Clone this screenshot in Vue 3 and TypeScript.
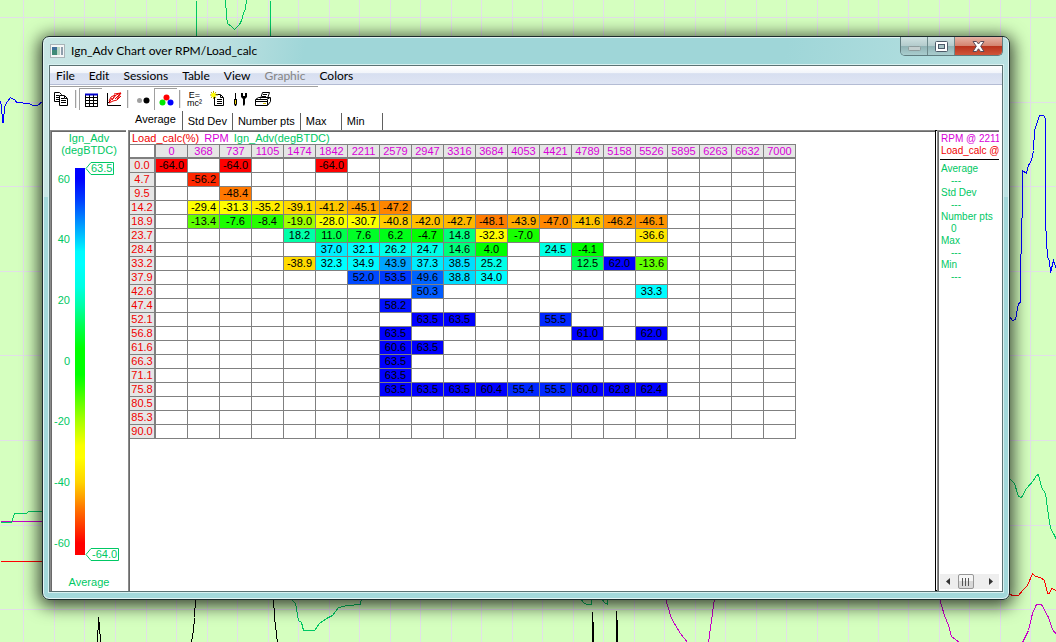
<script setup lang="ts">
interface Curve { color: string; points: string }
interface Stat { name: string; value: string }

const gridX: number[] = [23, 54, 84, 115, 146, 176, 207, 237, 268, 298, 329, 359, 390, 420, 451, 481, 512, 542, 573, 603, 634, 664, 695, 725, 756, 786, 817, 848, 878, 908, 939, 969, 1000, 1030]
const gridY: number[] = [17, 102, 186, 271, 355, 440, 525, 609]

const curves: Curve[] = [
  { color: '#0000ff', points: '0,101 1,105 2,122 3,122 4,106 7,101 10,97 15,100 16,102 29,103 32,105 37,105 42,101' },
  { color: '#00c864', points: '196,0 196,40' },
  { color: '#00c864', points: '270,0 270,40' },
  { color: '#00c864', points: '225,0 226,15 227,23 231,26 234,29 236,27 239,24 241,20 243,13 245,8 246,0' },
  { color: '#c800c8', points: '0,521 44,521' },
  { color: '#00c864', points: '0,522 11,522 14,513 26,513 28,511 44,511' },
  { color: '#ff0000', points: '0,561 44,561' },
  { color: '#000000', points: '97,642 98,617 99,625 100,642' },
  { color: '#000000', points: '191,642 193,630 194,617 195,598' },
  { color: '#000000', points: '273,598 274,617 276,634 277,642' },
  { color: '#00c864', points: '290,598 295,603 298,620 301,622 303,630 314,630 319,623 326,618 332,615 338,607 347,605 360,604 361,598' },
  { color: '#00c864', points: '580,598 583,602 586,604 591,604 591,598' },
  { color: '#00c864', points: '601,598 604,602 607,604 607,598' },
  { color: '#000000', points: '592,642 592,612 593,630 593,642' },
  { color: '#000000', points: '616,642 616,611 617,627 617,642' },
  { color: '#c800c8', points: '665,598 671,618 680,633 687,642' },
  { color: '#c800c8', points: '708,642 711,620 714,598' },
  { color: '#c800c8', points: '939,598 944,615 948,625 951,636 959,642' },
  { color: '#c800c8', points: '1022,642 1028,630 1032,613 1036,604 1041,604 1048,617 1052,629 1056,634' },
  { color: '#ff0000', points: '1008,593 1012,595 1018,595 1022,590 1027,585 1032,573 1035,576 1040,577 1044,580 1047,593 1049,593 1051,588 1056,590' },
  { color: '#00c864', points: '1008,477 1014,483 1018,496 1021,497 1026,488 1033,480 1036,475 1038,474 1041,487 1045,493 1048,515 1050,528 1053,533 1056,539' },
  { color: '#0000ff', points: '1009,316 1012,320 1015,319 1018,303 1020,302 1020,272 1022,200 1022,170 1026,173 1028,165 1031,160 1033,150 1034,130 1039,115 1043,115 1045,118 1045,222 1047,257 1049,260 1050,272 1053,260 1056,269' },
]

const menus: { label: string; off?: boolean }[] = [
  { label: 'File' }, { label: 'Edit' }, { label: 'Sessions' }, { label: 'Table' },
  { label: 'View' }, { label: 'Graphic', off: true }, { label: 'Colors' },
]
const tabs: string[] = ['Average', 'Std Dev', 'Number pts', 'Max', 'Min']

const columns: number[] = [0, 368, 737, 1105, 1474, 1842, 2211, 2579, 2947, 3316, 3684, 4053, 4421, 4789, 5158, 5526, 5895, 6263, 6632, 7000]

const source: [string, string][] = [
  ['0.0', '-64.0,,-64.0,,,-64.0'],
  ['4.7', ',-56.2'],
  ['9.5', ',,-48.4'],
  ['14.2', ',-29.4,-31.3,-35.2,-39.1,-41.2,-45.1,-47.2'],
  ['18.9', ',-13.4,-7.6,-8.4,-19.0,-28.0,-30.7,-40.8,-42.0,-42.7,-48.1,-43.9,-47.0,-41.6,-46.2,-46.1'],
  ['23.7', ',,,,18.2,11.0,7.6,6.2,-4.7,14.8,-32.3,-7.0,,,,-36.6'],
  ['28.4', ',,,,,37.0,32.1,26.2,24.7,14.6,4.0,,24.5,-4.1'],
  ['33.2', ',,,,-38.9,32.3,34.9,43.9,37.3,38.5,25.2,,,12.5,62.0,-13.6'],
  ['37.9', ',,,,,,52.0,53.5,49.6,38.8,34.0'],
  ['42.6', ',,,,,,,,50.3,,,,,,,33.3'],
  ['47.4', ',,,,,,,58.2'],
  ['52.1', ',,,,,,,,63.5,63.5,,,55.5'],
  ['56.8', ',,,,,,,63.5,,,,,,61.0,,62.0'],
  ['61.6', ',,,,,,,60.6,63.5'],
  ['66.3', ',,,,,,,63.5'],
  ['71.1', ',,,,,,,63.5'],
  ['75.8', ',,,,,,,63.5,63.5,63.5,60.4,55.4,55.5,60.0,62.8,62.4'],
  ['80.5', ''],
  ['85.3', ''],
  ['90.0', ''],
]
const rows = source.map(([load, list]) => {
  const values = list.split(',')
  return { load, cells: columns.map((_, i) => values[i] ?? '') }
})

const MAX = 63.5
const MIN = -64
const stops: [number, number, number, number][] = [
  [-64, 255, 0, 0], [-60, 255, 0, 0], [-56.2, 255, 40, 0], [-48.2, 255, 122, 0], [-45, 255, 160, 0],
  [-40, 255, 212, 0], [-32, 255, 255, 0], [-28, 250, 255, 0], [-19, 160, 255, 0], [-13.5, 96, 255, 0],
  [-8, 32, 255, 0], [-4.5, 0, 255, 0], [4, 0, 255, 0], [11, 0, 255, 76], [18.2, 0, 255, 168],
  [24.5, 0, 255, 228], [32, 0, 255, 255], [36, 0, 250, 255], [38.5, 0, 222, 255], [43.9, 0, 164, 255],
  [53.5, 0, 56, 255], [60, 0, 0, 255], [63.5, 0, 0, 255],
]
function colorFor(v: number): string {
  for (let i = 1; i < stops.length; i++) {
    const a = stops[i - 1]
    const b = stops[i]
    if (v <= b[0]) {
      const t = (v - a[0]) / (b[0] - a[0])
      const c = [1, 2, 3].map((k) => Math.round(a[k] + (b[k] - a[k]) * t))
      return `rgb(${c.join(',')})`
    }
  }
  return 'rgb(0,0,255)'
}
const place = (v: number): number => ((MAX - v) / (MAX - MIN)) * 100
const gradient = `linear-gradient(to top, ${stops.map((s) => `${colorFor(s[0])} ${(100 - place(s[0])).toFixed(2)}%`).join(', ')})`
const ticks: number[] = [60, 40, 20, 0, -20, -40, -60]

const stats: Stat[] = [
  { name: 'Average', value: '---' }, { name: 'Std Dev', value: '---' }, { name: 'Number pts', value: '0' },
  { name: 'Max', value: '---' }, { name: 'Min', value: '---' },
]
</script>

<template>
  <div class="desktop">
    <svg class="backdrop" viewBox="0 0 1056 642" preserveAspectRatio="none" aria-hidden="true">
      <rect v-for="x in gridX" :key="'x' + x" :x="x" y="0" width="1" height="642" fill="#e2dfe8" />
      <rect v-for="y in gridY" :key="'y' + y" x="0" :y="y" width="1056" height="1" fill="#e2dfe8" />
      <polyline v-for="(c, i) in curves" :key="i" :points="c.points" :stroke="c.color" fill="none" transform="translate(.5 .5)" shape-rendering="crispEdges" />
    </svg>

    <section class="window" aria-label="Ign_Adv Chart over RPM/Load_calc">
      <header class="titlebar">
        <svg class="app-icon" width="15" height="14" viewBox="0 0 15 14" aria-hidden="true">
          <rect x=".5" y=".5" width="14" height="13" fill="#f4f6f6" stroke="#a9b4b8" />
          <rect x="2" y="3" width="5" height="8" fill="#3f8a76" />
          <rect x="2" y="3" width="5" height="3" fill="#3f6f9a" />
          <rect x="7" y="3" width="3" height="8" fill="#b9d6c4" />
          <rect x="11" y="3" width="2" height="8" fill="#8f9fac" />
        </svg>
        <h1>Ign_Adv Chart over RPM/Load_calc</h1>
        <div class="controls">
          <button class="min" aria-label="Minimize">
            <svg width="13" height="6" viewBox="0 0 13 6"><rect x=".5" y="1.5" width="12" height="4" rx="1" fill="#c3cfcf" stroke="#8d9c9d" /></svg>
          </button>
          <button class="max" aria-label="Maximize">
            <svg width="13" height="11" viewBox="0 0 13 11"><rect x=".5" y=".5" width="12" height="10" rx="1" fill="#fff" stroke="#4c5a68" /><rect x="3.500" y="3.500" width="6" height="4" fill="#a9c3c6" stroke="#4c5a68" /></svg>
          </button>
          <button class="close" aria-label="Close">
            <svg width="13" height="11" viewBox="0 0 13 11"><path d="M1 .5h3.500l2 2.500 2-2.500H12L8.700 5.300 12 10.500H8.500l-2-2.700-2 2.700H1l3.300-5.200z" fill="#fff" stroke="#5a4a58" /></svg>
          </button>
        </div>
      </header>

      <div class="client">
        <nav class="menubar">
          <button v-for="m in menus" :key="m.label" :disabled="m.off">{{ m.label }}</button>
        </nav>

        <div class="toolbar" role="toolbar">
          <button aria-label="Copy">
            <svg viewBox="0 0 16 16"><g fill="#fff" stroke="#000"><path d="M.5 1.500h5l2 2v7h-7z" /><path d="M5.500 4.500h5l3 3v7h-8z" /></g><path d="M2 4.500h3M2 6.500h3M2 8.500h3M7 7.500h3M7 9.500h5M7 11.500h5M10.500 5v2.500H13" fill="none" stroke="#000" /></svg>
          </button>
          <i class="sep"></i>
          <button class="on" aria-label="Table view" aria-pressed="true">
            <svg viewBox="0 0 16 16"><path d="M2 2h13v13H2z" fill="#fff" /><path d="M2.500 2v12.500M6.500 2v13M10.500 2v13M14.500 2v13M2 5.500h13M2 8.500h13M2 11.500h13M2 14.500h13" stroke="#000" /><path d="M2 2.500h13" stroke="#00c" stroke-width="2" /></svg>
          </button>
          <button aria-label="Graph view">
            <svg viewBox="0 0 16 16"><path d="M1.500 2v12.500H15M1 13l3-3" fill="none" stroke="#000" /><path d="M3 10l2-4 4-2-3 5 4-5 5-2-4 6 4-3-4 4-4 1-4 2 3-5M8 3l7-1-6 6" fill="none" stroke="#e80000" /></svg>
          </button>
          <i class="sep"></i>
          <button aria-label="Monochrome">
            <svg viewBox="0 0 16 16"><circle cx="4.500" cy="9.500" r="2.500" fill="#a0a0a0" /><circle cx="11.500" cy="9.500" r="3" /></svg>
          </button>
          <button class="on" aria-label="Color" aria-pressed="true">
            <svg viewBox="0 0 16 16"><circle cx="8.500" cy="5.500" r="3" fill="#f00" /><circle cx="4.500" cy="10.500" r="3" fill="#00e800" /><circle cx="12.500" cy="10.500" r="3" fill="#00f" /></svg>
          </button>
          <i class="sep"></i>
          <button class="formula" aria-label="Formula"><span>E=</span><span>mc²</span></button>
          <button aria-label="New note">
            <svg viewBox="0 0 16 16"><path d="M4.500 3.500h6l3 3v8h-9z" fill="#fff" stroke="#000" /><path d="M10.500 4v2.500H13M7 8.500h5M7 10.500h5M7 12.500h5" fill="none" stroke="#000" /><path d="M3.500 0v8M0 4h8M1 1l5 6M6 1L1 7" stroke="#b8a800" /><circle cx="3.500" cy="4" r="2.300" fill="#ff0" /></svg>
          </button>
          <button aria-label="Options">
            <svg viewBox="0 0 16 16"><path d="M2.500 2v6" stroke="#000" /><path d="M1 8h3v5l-1 2H2l-1-2z" /><path d="M2.500 9v4" stroke="#f0d000" /><path d="M8 2h2v3h2V2h2v4l-2 2v5l-1 2-1-1V8L8 6z" /></svg>
          </button>
          <button aria-label="Print">
            <svg class="wide" viewBox="0 0 17 16"><path d="M5.500 7.500l2-6h7l-2 6M.5 8.500l3-2h12v4l-3 4h-12z" fill="#fff" stroke="#000" /><path d="M8 3.500h4M7 5.500h4M1 8.500h11l3-2M1 10.500h11M12.500 9v5" fill="none" stroke="#000" /><path d="M8 12.500h3" stroke="#d8c000" /></svg>
          </button>
        </div>

        <div class="tabs" role="tablist">
          <button v-for="(t, i) in tabs" :key="t" role="tab" :aria-selected="i === 0" :class="{ active: i === 0 }">{{ t }}</button>
        </div>

        <main class="panes">
          <aside class="gauge">
            <h2>Ign_Adv<br />(degBTDC)</h2>
            <div class="scale">
              <div class="ticks">
                <span v-for="t in ticks" :key="t" :style="{ top: place(t) + '%' }">{{ t }}</span>
              </div>
              <div class="ramp" :style="{ background: gradient }"></div>
              <div class="tags">
                <svg width="30" height="13" viewBox="0 0 30 13"><path d="M1 6.500l5-6h22.500v12H6z" /><text x="6" y="10">63.5</text></svg>
                <svg width="34" height="13" viewBox="0 0 34 13"><path d="M1 6.500l5-6h27.500v12H6z" /><text x="7" y="10">-64.0</text></svg>
              </div>
            </div>
            <p>Average</p>
          </aside>

          <section class="sheet">
            <div class="legend"><span class="load">Load_calc(%)</span><span class="rpm">RPM</span><span class="ign">Ign_Adv(degBTDC)</span></div>
            <table>
              <thead>
                <tr><td class="corner"></td><th v-for="c in columns" :key="c" scope="col">{{ c }}</th></tr>
              </thead>
              <tbody>
                <tr v-for="r in rows" :key="r.load">
                  <th scope="row">{{ r.load }}</th>
                  <td v-for="(v, i) in r.cells" :key="i" :style="v ? { background: colorFor(Number(v)) } : undefined">{{ v }}</td>
                </tr>
              </tbody>
            </table>
          </section>

          <aside class="readout">
            <div class="cursor"><div class="rpm">RPM @ 2211</div><div class="load">Load_calc @</div></div>
            <dl>
              <template v-for="s in stats" :key="s.name"><dt>{{ s.name }}</dt><dd>{{ s.value }}</dd></template>
            </dl>
            <div class="hscroll">
              <button aria-label="Scroll left"><svg width="4" height="7" viewBox="0 0 4 7"><path d="M4 0v7L0 3.500z" fill="#333" /></svg></button>
              <button class="thumb" aria-label="Scroll position"><svg width="8" height="8" viewBox="0 0 8 8"><path d="M.5 0v8M3.500 0v8M6.500 0v8" stroke="#555" /></svg></button>
              <button class="next" aria-label="Scroll right"><svg width="4" height="7" viewBox="0 0 4 7"><path d="M0 0v7l4-3.500z" fill="#333" /></svg></button>
            </div>
          </aside>
        </main>
      </div>
    </section>
  </div>
</template>

<style>
body { margin: 0; }
</style>

<style scoped>
.desktop {
  position: relative;
  display: flex;
  box-sizing: border-box;
  min-height: 100vh;
  padding: 36px 46px 42px 42px;
  background: #d5ffbf;
  overflow: hidden;
  font: 11px/13px "Liberation Sans", Arial, sans-serif;
  color: #000;
}
.backdrop { position: absolute; inset: 0; width: 100%; height: 100%; }
button { margin: 0; padding: 0; border: 0; background: none; font: inherit; color: inherit; }
h1, h2, p, dl, dd { margin: 0; font: inherit; }

.window {
  position: relative;
  flex: 1;
  min-width: 0;
  display: flex;
  flex-direction: column;
  box-sizing: border-box;
  border: 1px solid #1c2b2c;
  border-radius: 7px;
  padding: 0 6px 7px;
  background: linear-gradient(#a3d8da, #a3d8da) 0 160px no-repeat, linear-gradient(100deg, #c9e6e5 0, #bfe1e1 170px, #9fd6d8 260px, #9fd6d8 70%, #c5e6e6 100%);
  box-shadow: inset 0 0 0 1px #e4f5f5, 0 3px 17px 3px rgba(0, 0, 0, .75);
}
.titlebar { display: flex; align-items: flex-start; height: 28px; padding-left: 1px; }
.app-icon { margin: 7px 6px 0 0; }
h1 { flex: 1; margin-top: 6px; font: 12px/16px Lato, "Open Sans", sans-serif; white-space: nowrap; }
.controls { display: flex; height: 18px; border: 1px solid #5f7d80; border-top: 0; border-radius: 0 0 5px 5px; overflow: hidden; }
.controls button { display: flex; align-items: center; justify-content: center; width: 27px; border-right: 1px solid #6c898b; background: linear-gradient(#d0e2e2 0, #b4cccd 48%, #8fb2b4 50%, #a9cdce 100%); }
.controls .close { width: 47px; border-right: 0; background: linear-gradient(#e6b4a6 0, #d48470 48%, #b8311b 50%, #d0553a 100%); }
.controls .min { align-items: flex-end; padding-bottom: 4px; }

.client { flex: 1; display: flex; flex-direction: column; border: 1px solid #5b7273; background: #fff; box-shadow: 0 0 0 1px #d8f1f1; }
.menubar { display: flex; gap: 14px; height: 18px; padding-left: 6px; border-bottom: 1px solid #b4bcd4; background: linear-gradient(#fff 0, #f1f4fa 40%, #d7dff0 42%, #dfe5f4 100%); font: 12px/20px Lato, "Open Sans", sans-serif; }
.menubar button:disabled { color: #858585; }
.toolbar { display: flex; align-items: center; width: 268px; height: 24px; margin-top: 1px; border-top: 1px solid #a0a0a0; }
.toolbar button { display: flex; align-items: center; justify-content: center; box-sizing: border-box; width: 23px; height: 22px; }
.toolbar .on { border-top: 1px solid #a0a0a0; border-left: 1px solid #a0a0a0; }
.toolbar svg { width: 16px; height: 16px; flex: none; }
.toolbar .wide { width: 17px; }
.toolbar .formula { flex-direction: column; font-size: 9px; line-height: 8px; }
.sep { box-sizing: border-box; width: 2px; height: 18px; margin: 0 2px; border-left: 1px solid #a0a0a0; border-right: 1px solid #e8e8e8; }
.tabs { display: flex; align-items: flex-end; height: 19px; padding-left: 79px; line-height: 17px; }
.tabs button { min-width: 41px; padding: 0 5px; text-align: left; white-space: nowrap; border-right: 1px solid #606060; }
.tabs .active { padding: 0 6px 2px; }

.panes { flex: 1; display: flex; min-width: 0; }
.gauge, .sheet, .readout { box-sizing: border-box; border: solid #8a8a8a; border-width: 1px 0 0 1px; box-shadow: inset 1px 1px 0 #696969; }
.gauge { display: flex; flex-direction: column; width: 76px; margin-right: 2px; padding: 1px 0 1px 1px; color: #00c864; text-align: center; }
.gauge h2 { line-height: 12px; }
.gauge p { line-height: 15px; margin-top: 20px; }
.scale { flex: 1; display: flex; margin-top: 12px; }
.ticks { position: relative; width: 21px; }
.ticks span { position: absolute; right: 3px; transform: translateY(-50%); }
.ramp { width: 10px; margin-left: 2px; }
.tags { display: flex; flex-direction: column; justify-content: space-between; margin: -6px 0; }
.tags path { fill: none; stroke: #00c864; }
.tags text { fill: #00c864; font-size: 11px; }

.sheet { flex: 1; min-width: 0; margin-right: 1px; padding: 2px 0 0 1px; }
.legend { display: flex; gap: 5px; height: 11px; padding-left: 2px; line-height: 11px; }
.load { color: #f00000; }
.rpm { color: #d800d8; }
.ign { color: #00c864; }
table { width: 666px; table-layout: fixed; border-collapse: separate; border-spacing: 0; border-top: 1px solid #808080; }
th, td { box-sizing: border-box; width: 32px; height: 14px; padding: 0; border: solid #808080; border-width: 0 1px 1px 0; font-weight: normal; line-height: 13px; text-align: center; white-space: nowrap; }
th { background: #e6e6e6; color: #d800d8; }
thead th, thead td { border-bottom-width: 2px; line-height: 12px; }
tbody th, .corner { width: 26px; border-right-width: 2px; color: #f00000; }

.readout { display: flex; flex-direction: column; width: 62px; margin-right: 3px; padding: 2px 0 0 2px; font-size: 10px; line-height: 12px; white-space: nowrap; }
.sheet + .readout { box-shadow: inset 1px 1px 0 #696969, -2px 0 0 -1px #fff, -2px 0 0 #000; }
.cursor { overflow: hidden; padding: 0 0 2px 1px; border-bottom: 1px solid #000; }
dl { flex: 1; margin-top: 3px; padding-left: 1px; color: #00c864; }
dd { padding-left: 10px; }
.hscroll { display: flex; justify-content: space-between; height: 15px; margin-bottom: 2px; background: #eee; }
.hscroll button { display: flex; align-items: center; justify-content: center; width: 16px; }
.hscroll .thumb { box-sizing: border-box; border: 1px solid #979797; border-radius: 2px; background: linear-gradient(#f5f5f5 50%, #d8d8d8 50%); }
.hscroll .next { margin-left: 8px; }
</style>
